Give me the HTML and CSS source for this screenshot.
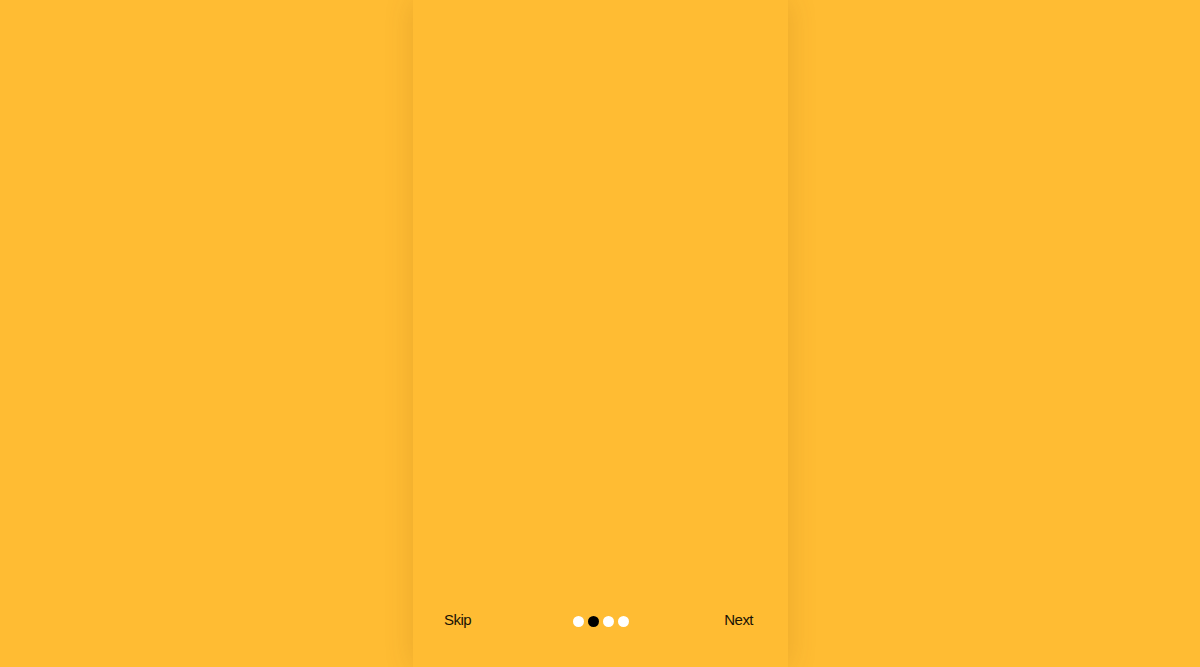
FILE: index.html
```html
<!DOCTYPE html>
<html>
<head>
<meta charset="utf-8">
<link rel="stylesheet" href="styles.css">
</head>
<body>
<div class="page">
  <div class="phone">
    <div class="content"></div>
    <div class="footer">
      <span class="link">Skip</span>
      <div class="dots">
        <span class="dot"></span>
        <span class="dot active"></span>
        <span class="dot"></span>
        <span class="dot"></span>
      </div>
      <span class="link">Next</span>
    </div>
  </div>
</div>
</body>
</html>
```
FILE: styles.css
```css
html, body {
  margin: 0;
  padding: 0;
  height: 100%;
  background: #ffbc33;
  font-family: "Liberation Sans", Arial, sans-serif;
  overflow: hidden;
}
.page {
  height: 667px;
  display: flex;
  justify-content: center;
}
.phone {
  width: 375px;
  height: 100%;
  background: #ffbc33;
  box-shadow: 0 0 28px rgba(120, 70, 0, 0.16);
  display: flex;
  flex-direction: column;
  margin-left: 1px;
}
.content {
  flex: 1;
}
.footer {
  height: 40px;
  margin-bottom: 27px;
  padding: 0 35px 0 31px;
  display: flex;
  align-items: center;
  justify-content: space-between;
}
.link {
  font-size: 15px;
  color: #1a1305;
  letter-spacing: -0.55px;
  margin-top: -2px;
}
.dots {
  display: flex;
  gap: 4px;
  margin-left: 6px;
  margin-top: 2px;
}
.dot {
  width: 11px;
  height: 11px;
  border-radius: 50%;
  background: #ffffff;
}
.dot.active {
  background: #000000;
}
```
